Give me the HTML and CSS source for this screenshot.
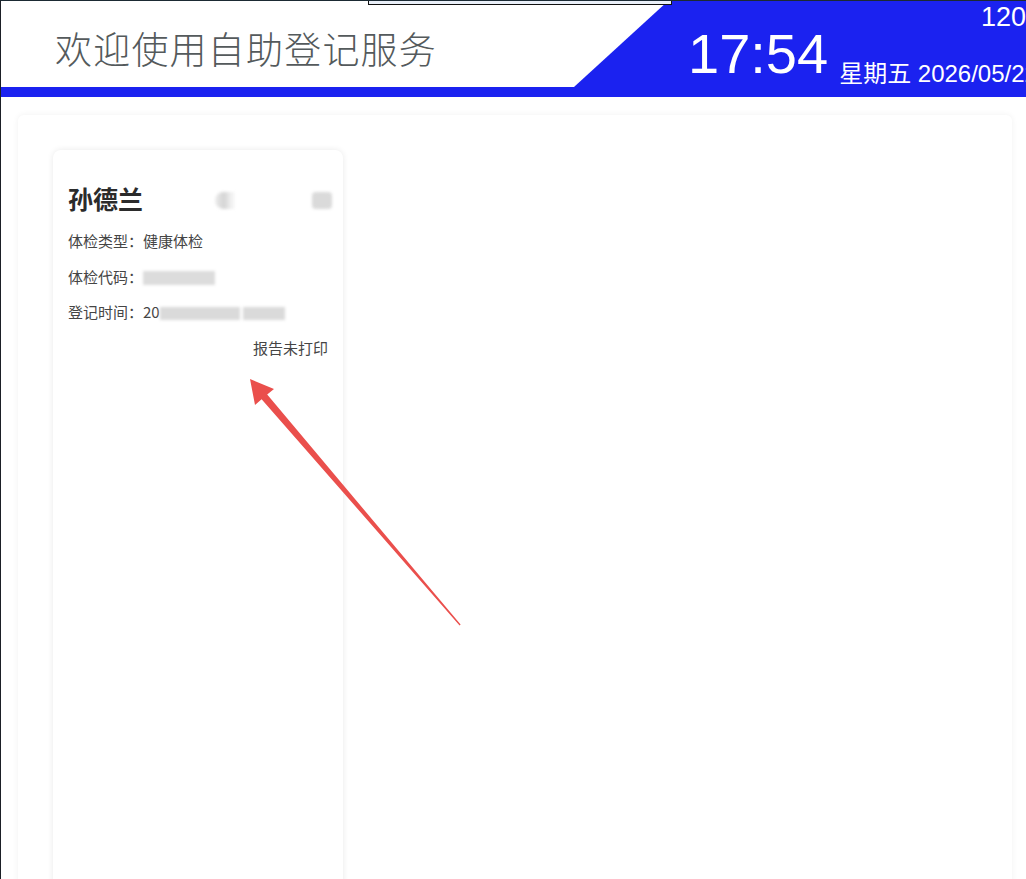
FILE: index.html
```html
<!DOCTYPE html>
<html lang="zh-CN">
<head>
<meta charset="utf-8">
<title>自助登记服务</title>
<link rel="stylesheet" href="styles.css">
</head>
<body>
<div class="page">
  <header class="header">
    <div class="title">欢迎使用自助登记服务</div>
    <div class="clock">
      <div class="countdown">120</div>
      <div class="timerow">
        <span class="time">17:54</span>
        <span class="date">星期五 2026/05/22</span>
      </div>
    </div>
  </header>
  <div class="topbox"></div>
  <div class="stripe"></div>
  <main class="panel">
    <div class="card">
      <div class="namerow">
        <span class="name">孙德兰</span>
        <span class="blur blur-a"></span>
        <span class="blur blur-b"></span>
      </div>
      <div class="row">体检类型：健康体检</div>
      <div class="row">体检代码：<span class="blur blur-code"></span></div>
      <div class="row">登记时间：20<span class="blur blur-time"></span><span class="blur blur-time2"></span></div>
      <div class="status">报告未打印</div>
    </div>
  </main>
  <svg class="arrow" width="1026" height="879" viewBox="0 0 1026 879">
    <polygon points="250,379 274,389 267.2,394.6 460.6,624.6 459.6,625.4 261.6,399.2 255,405" fill="#ea4f4c"/>
  </svg>
</div>
</body>
</html>
```
FILE: styles.css
```css
html, body {
  margin: 0;
  padding: 0;
  background: #ffffff;
  overflow: hidden;
}
body {
  width: 1026px;
  height: 879px;
  font-family: "Liberation Sans", "Noto Sans CJK SC", sans-serif;
}
.page {
  position: relative;
  width: 1025px;
  height: 878px;
  border-left: 1px solid #1b1f26;
  border-top: 1px solid #1b2a33;
  overflow: hidden;
}
.topbox {
  position: absolute;
  z-index: 2;
  left: 367px;
  top: -2px;
  width: 302px;
  height: 4px;
  background: #e9eff8;
  border: 1px solid #111;
}
.header {
  display: flex;
  height: 86px;
  background: #fff;
}
.title {
  flex: 1;
  padding-left: 54px;
  padding-top: 25px;
  font-family: "Noto Sans CJK SC", sans-serif;
  font-weight: 300;
  font-size: 37px;
  line-height: 44px;
  letter-spacing: 1.2px;
  color: #545a5c;
}
.clock {
  width: 452px;
  flex: none;
  overflow: hidden;
  background: #1b22f0;
  clip-path: polygon(94px 0, 100% 0, 100% 100%, 0 100%);
  color: #fff;
  display: flex;
  flex-direction: column;
}
.countdown {
  padding-left: 407px;
  padding-top: 1px;
  font-size: 27px;
  line-height: 30px;
  white-space: nowrap;
}
.timerow {
  padding-left: 114px;
  display: flex;
  align-items: flex-end;
  white-space: nowrap;
  margin-top: -6px;
}
.time {
  flex: none;
  font-size: 56px;
  line-height: 56px;
}
.date {
  flex: none;
  margin-left: 11px;
  margin-bottom: -4px;
  font-size: 24px;
  line-height: 24px;
}
.stripe {
  height: 10px;
  background: #1b22f0;
}
.panel {
  margin: 18px 14px 0 17px;
  height: 800px;
  padding: 35px 0 0 35px;
  background: #fff;
  box-shadow: 0 0 6px rgba(0, 0, 0, 0.06);
  border-radius: 6px;
}
.card {
  width: 260px;
  height: 760px;
  padding: 28px 15px 0 15px;
  background: #fff;
  border-radius: 8px;
  box-shadow: 0 0 6px rgba(0, 0, 0, 0.09);
  font-family: "Noto Sans CJK SC", sans-serif;
  color: #444;
}
.namerow {
  display: flex;
  align-items: center;
  height: 40px;
  margin-bottom: 13px;
  white-space: nowrap;
}
.name {
  flex: none;
  font-size: 25px;
  font-weight: 700;
  color: #2b2b2b;
}
.blur {
  display: inline-block;
  flex: none;
  background: #d6d6d6;
  filter: blur(1.5px);
  vertical-align: middle;
}
.blur-a {
  width: 20px;
  height: 17px;
  margin-left: 72px;
  margin-top: 5px;
  border-radius: 9px 0 0 9px;
  background: linear-gradient(to right, #ececec, #d4d4d4 45%, #f0f0f0 80%, #fafafa);
}
.blur-b {
  width: 20px;
  height: 17px;
  margin-left: 77px;
  margin-top: 5px;
  border-radius: 4px;
  background: #dadada;
}
.blur-code {
  width: 72px;
  height: 14px;
  background: #dcdcdc;
}
.blur-time {
  width: 80px;
  height: 13px;
  background: #dadada;
}
.blur-time2 {
  width: 42px;
  height: 13px;
  margin-left: 3px;
  background: #dadada;
}
.row {
  font-size: 15px;
  line-height: 20px;
  height: 20px;
  margin-bottom: 15.5px;
  color: #454545;
  white-space: nowrap;
}
.status {
  text-align: right;
  font-size: 15px;
  line-height: 20px;
  color: #454545;
  padding-right: 0;
}
.arrow {
  position: absolute;
  left: -1px;
  top: -1px;
  pointer-events: none;
}
```
